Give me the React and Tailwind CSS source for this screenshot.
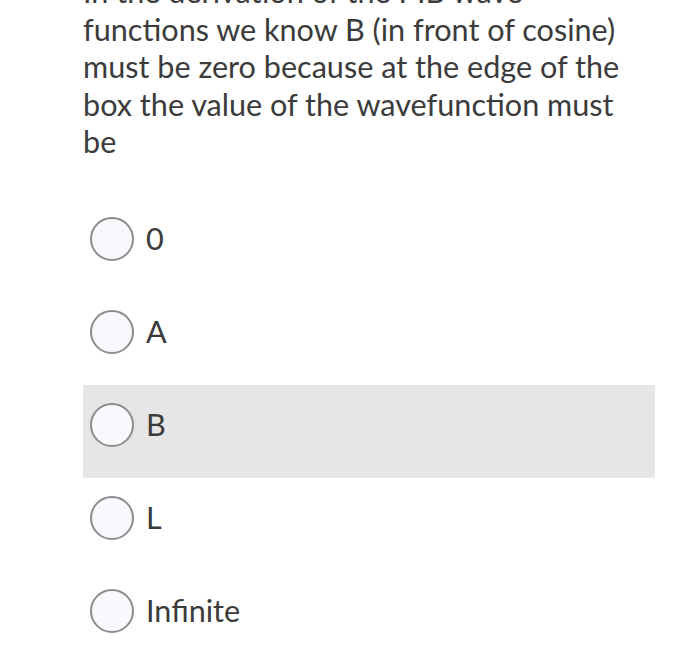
import React from 'react';

const OPTIONS = ['0', 'A', 'B', 'L', 'Infinite'];

export default function App() {
  return (
    <div className="w-[700px] h-[650px] overflow-hidden bg-white" style={{ fontFamily: 'Lato, "Open Sans", sans-serif' }}>
      <div className="ml-[83px] w-[572px] mt-[-27px]">
        <p className="text-[30.6px] leading-[37.5px] text-[#3b3b3b]">
          In the derivation of the PIB wave<br />
          functions we know B (in front of cosine)<br />
          must be zero because at the edge of the<br />
          box the value of the wavefunction must<br />
          be
        </p>

        <div className="mt-[38px]">
          {OPTIONS.map(opt => (
            <div
              key={opt}
              className={`flex items-center h-[93px] pl-[7px] pb-[12px] ${opt === 'B' ? 'bg-[#e6e6e6]' : ''}`}
            >
              <span className="w-[44px] h-[44px] rounded-full border-2 border-[#8c8c8c] bg-[#f8f9fc] shrink-0" />
              <span className="ml-[12px] text-[30.6px] text-[#3b3b3b]">{opt}</span>
            </div>
          ))}
        </div>
      </div>
    </div>
  );
}
